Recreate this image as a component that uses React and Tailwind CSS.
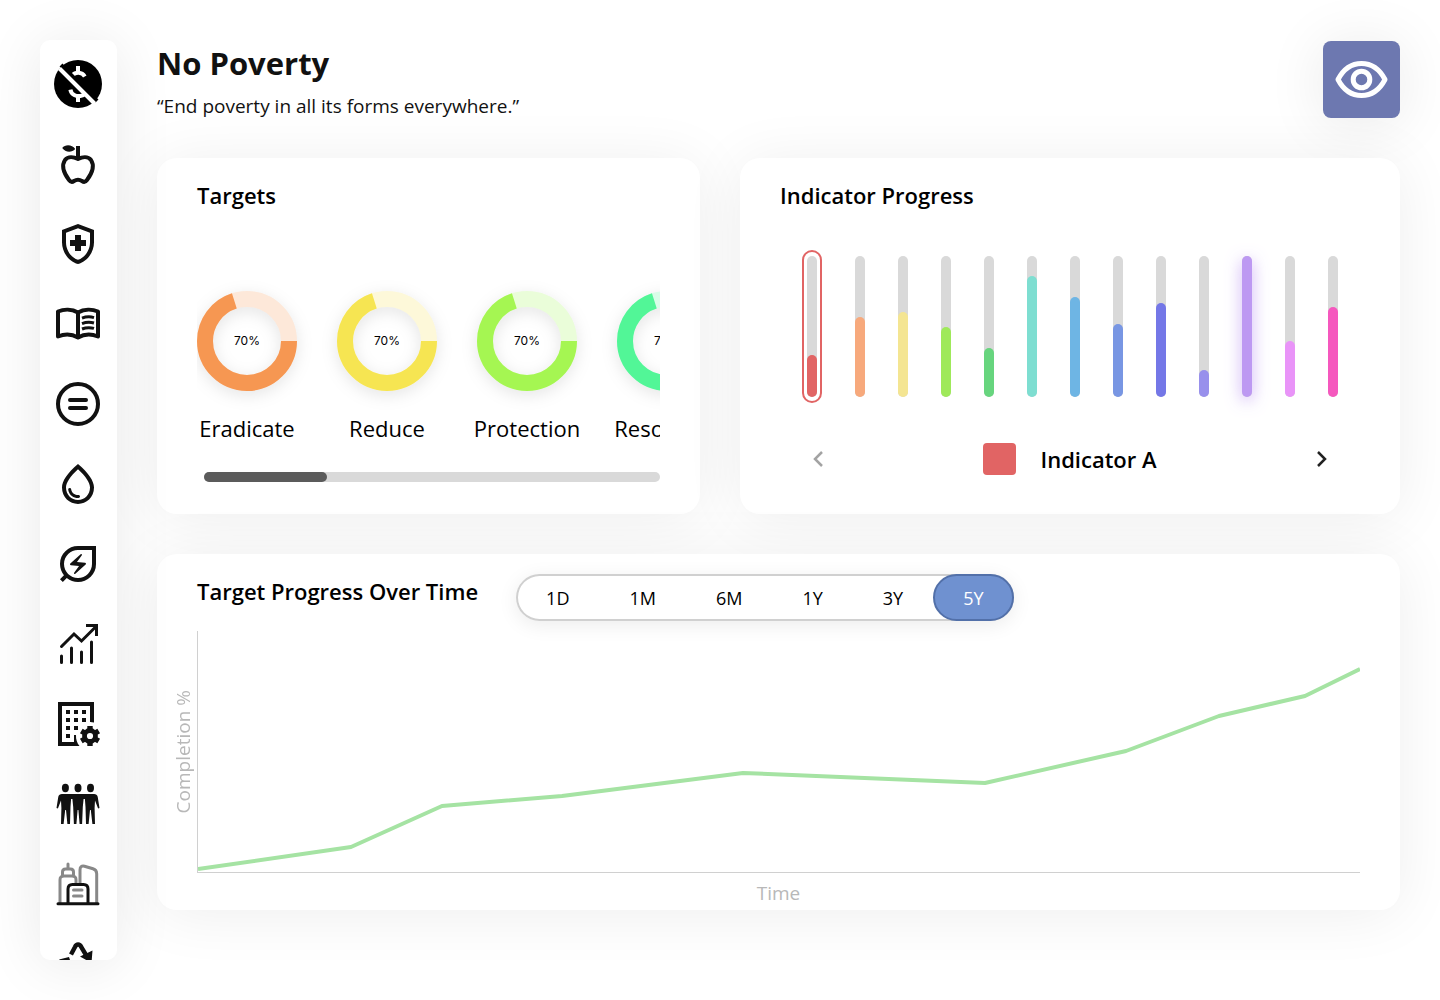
import React, { useState } from 'react';
import { MdOutlineHealthAndSafety, MdOutlineWaterDrop, MdOutlineEnergySavingsLeaf } from 'react-icons/md';

const targets = [
    { name: 'Eradicate', percent: 70, ring: '#f69752', track: '#fde8d9' },
    { name: 'Reduce', percent: 70, ring: '#f6e552', track: '#fdf8d9' },
    { name: 'Protection', percent: 70, ring: '#a5f652', track: '#eafdd9' },
    { name: 'Resources', percent: 70, ring: '#52f697', track: '#d9fde8' },
];

const indicators = [
    { name: 'Indicator A', color: '#e16464', value: 30 },
    { name: 'Indicator B', color: '#f7a97c', value: 57 },
    { name: 'Indicator C', color: '#f4e592', value: 60 },
    { name: 'Indicator D', color: '#9fe95a', value: 50 },
    { name: 'Indicator E', color: '#67d57e', value: 35 },
    { name: 'Indicator F', color: '#7eded1', value: 86 },
    { name: 'Indicator G', color: '#6eb5e4', value: 71 },
    { name: 'Indicator H', color: '#7896e3', value: 52 },
    { name: 'Indicator I', color: '#7477e7', value: 67 },
    { name: 'Indicator J', color: '#9890ec', value: 19 },
    { name: 'Indicator K', color: '#bd99f2', value: 100 },
    { name: 'Indicator L', color: '#e994f8', value: 40 },
    { name: 'Indicator M', color: '#f558be', value: 64 },
];

const ranges = ['1D', '1M', '6M', '1Y', '3Y', '5Y'];

// --- SIDEBAR ICONS ---
function NoPovertyIcon() {
    return (
        <svg className="w-12 h-12" viewBox="0 0 48 48" fill="none">
            <circle cx="24" cy="24" r="24" fill="#000" />
            <g stroke="#fff" strokeWidth="4">
                <path d="M24 6v6M24 36v6" />
                <path d="M18.6 15.2c2.6-3.4 9.4-3.6 12.2 1.2" />
                <path d="M16.4 29.6c.8 5.2 6 7 10 6.4 2-.3 3.4-1 4.6-2.4" />
            </g>
            <path d="M7 5l36 36" stroke="#000" strokeWidth="4" />
            <path d="M5.500 8.500L40.500 43.500" stroke="#fff" strokeWidth="4" />
        </svg>
    );
}

function AppleIcon() {
    return (
        <svg className="w-12 h-12" viewBox="0 0 48 48" fill="none" stroke="#111" strokeWidth="4" strokeLinejoin="round">
            <path d="M24 6v13" />
            <path d="M8.2 8c3-4 10-3.600 13 1-3.500 4-10 3.400-13-1z" fill="#111" stroke="none" />
            <path d="M24 19c-4-2-10-3-13 1-4 6-.5 14 4 20 1.500 2 3 2.400 5 1 2.500-1.600 5.500-1.600 8 0 2 1.400 3.500 1 5-1 4.500-6 8-14 4-20-3-4-9-3-13-1z" />
        </svg>
    );
}

function BookIcon() {
    return (
        <svg className="w-12 h-12" viewBox="0 0 48 48" fill="none" stroke="#111" strokeWidth="4" strokeLinejoin="round">
            <path d="M24 12.500C18 9 10 9 4 11.500V36.500c6-2.400 14-2.400 20 1 6-3.400 14-3.400 20-1V11.500C38 9 30 9 24 12.500zM24 12.500v25" />
            <path d="M28 18.200c4-1.600 8-1.800 12-.6M28 23.600c4-1.600 8-1.800 12-.6M28 29c4-1.600 8-1.800 12-.6" strokeWidth="3" />
        </svg>
    );
}

function EqualityIcon() {
    return (
        <svg className="w-12 h-12" viewBox="0 0 48 48" fill="none" stroke="#111" strokeWidth="4" strokeLinecap="round">
            <circle cx="24" cy="24" r="20" />
            <path d="M16 20h16M16 28h16" />
        </svg>
    );
}

function GrowthIcon() {
    return (
        <svg className="w-12 h-12" viewBox="0 0 48 48" fill="none" stroke="#111" strokeWidth="3" strokeLinecap="round">
            <path d="M7.500 26.500L20 14l7.500 7L42.500 6" />
            <path d="M33.500 5.500h9v9" strokeLinecap="square" />
            <path d="M7.500 36v6.500M17.500 28v14.500M27.500 32v10.500M37.500 22v20.500" />
        </svg>
    );
}

function BuildingIcon() {
    return (
        <svg className="w-12 h-12" viewBox="0 0 48 48" fill="#111">
            <path d="M4 2h36v20.500a14 14 0 0 0-4-.5V6H8v36h12v-7h2c-.2 4.500 1 8 3.500 11H4z" />
            <path d="M12 10h4v4h-4zM20 10h4v4h-4zM28 10h4v4h-4zM12 18h4v4h-4zM20 18h4v4h-4zM28 18h4v4h-4zM12 26h4v4h-4zM20 26h4v4h-4zM12 34h4v4h-4z" />
            <circle cx="36" cy="36" r="5.500" fill="none" stroke="#111" strokeWidth="4.800" />
            <g stroke="#111" strokeWidth="5.400">
                <path d="M36 26v4M36 42v4M27.300 31l3.500 2M41.200 39l3.500 2M27.300 41l3.500-2M41.200 33l3.500-2" />
            </g>
        </svg>
    );
}

function PeopleIcon() {
    return (
        <svg className="w-12 h-12" viewBox="0 0 48 48" fill="#111">
            <ellipse cx="11.400" cy="8" rx="3.500" ry="4.200" />
            <ellipse cx="24" cy="8" rx="3.500" ry="4.200" />
            <ellipse cx="36.500" cy="8" rx="3.500" ry="4.200" />
            <path d="M8 14h32c2 0 3.200.8 3.700 2.800L45.500 28l-1.400.6L41 20.500l-.4 7.500.4 16h-2.600L36.800 30h-.8L34.600 44H32l-.5-17-.6-8h-1.300l-.8 8-.7 17h-2.500l-1.200-14h-.8l-1.200 14h-2.500l-.7-17-.8-8h-1.300l-.6 8L16 44h-2.600L12 30h-.8L9.600 44H7l.4-16-.4-7.500-3.100 8.100-1.400-.6 1.800-11.200C4.800 14.800 6 14 8 14z" />
        </svg>
    );
}

function CityIcon() {
    return (
        <svg className="w-12 h-12" viewBox="0 0 48 48" fill="none" strokeWidth="3" strokeLinecap="round" strokeLinejoin="round">
            <g stroke="#888">
                <path d="M6 43V20c0-3 1-4 4-4h8c3 0 4 1 4 4v3" />
                <path d="M8.500 15.500V12c0-2 1-3 3-3h5c2 0 3 1 3 3v3.500M14 8.500V4" />
                <path d="M26 23V10c0-3 1.600-4.600 4.500-3.800l8.500 2.600c2.500.8 3.700 2.200 3.700 5V43" />
                <path d="M19.500 30h8.500M19.500 36h8.500" />
            </g>
            <path d="M14 43V29c0-3 1.500-4.500 4.500-4.500h11c3 0 4.500 1.500 4.500 4.500v14M4 43.700h40" stroke="#111" />
        </svg>
    );
}

function RecycleIcon() {
    return (
        <svg className="w-12 h-12" viewBox="0 0 48 48" fill="none">
            <path d="M17 14.500L21 7c1.500-3.300 4.700-3.300 6.200 0l6 10" stroke="#111" strokeWidth="4.400" />
            <path d="M26 16.500l12.500-6-1 12.500z" fill="#111" />
            <path d="M5 19.500l10-2.500 4 12z" fill="#111" />
            <path d="M12 22L6 33c-1.500 3 0 6 3.500 6H18M26 39h12c3.500 0 5-3 3.500-6l-3-5" stroke="#111" strokeWidth="4.400" />
        </svg>
    );
}

const goals = [
    { label: 'No Poverty', icon: <NoPovertyIcon /> },
    { label: 'Zero Hunger', icon: <AppleIcon /> },
    { label: 'Good Health', icon: <MdOutlineHealthAndSafety className="w-12 h-12" /> },
    { label: 'Quality Education', icon: <BookIcon /> },
    { label: 'Gender Equality', icon: <EqualityIcon /> },
    { label: 'Clean Water', icon: <MdOutlineWaterDrop className="w-12 h-12" /> },
    { label: 'Clean Energy', icon: <MdOutlineEnergySavingsLeaf className="w-12 h-12" /> },
    { label: 'Economic Growth', icon: <GrowthIcon /> },
    { label: 'Infrastructure', icon: <BuildingIcon /> },
    { label: 'Reduced Inequalities', icon: <PeopleIcon /> },
    { label: 'Sustainable Cities', icon: <CityIcon /> },
    { label: 'Responsible Consumption', icon: <RecycleIcon /> },
];

function Sidebar() {
    return (
        <nav className="sticky top-10 w-[77px] h-[calc(100vh-80px)] shrink-0 overflow-hidden rounded-[10px] bg-white pt-5 pl-[14px] flex flex-col items-start gap-8 text-[#111] shadow-[0_4px_60px_rgba(0,0,0,0.09)]">
            {goals.map((goal) => (
                <a key={goal.label} href="#" aria-label={goal.label} className="shrink-0">
                    {goal.icon}
                </a>
            ))}
        </nav>
    );
}

function Card({ children, className }) {
    return (
        <section className={`min-w-0 rounded-[20px] bg-white shadow-[0_4px_60px_rgba(0,0,0,0.07)] ${className}`}>
            {children}
        </section>
    );
}

function Donut({ percent, ring, track }) {
    const length = 2 * Math.PI * 42;
    return (
        <svg className="w-[100px] h-[100px] overflow-visible drop-shadow-[0_4px_8px_rgba(0,0,0,0.1)]" viewBox="0 0 100 100" fill="none">
            <circle cx="50" cy="50" r="42" stroke={track} strokeWidth="16" />
            <circle cx="50" cy="50" r="42" stroke={ring} strokeWidth="16" strokeDasharray={`${(length * percent) / 100} ${length}`} />
        </svg>
    );
}

function Targets() {
    return (
        <Card className="h-[356px] px-10 pt-5">
            <h2 className="text-[22px] leading-[34px] font-semibold">Targets</h2>
            <div className="mt-[59px] pt-5 pb-[14px] flex gap-10 overflow-hidden">
                {targets.map((target) => (
                    <div key={target.name} className="w-[100px] shrink-0 flex flex-col items-center">
                        <div className="grid place-items-center">
                            <div className="col-start-1 row-start-1">
                                <Donut percent={target.percent} ring={target.ring} track={target.track} />
                            </div>
                            <span className="col-start-1 row-start-1 font-[Inter] text-xs">{target.percent}%</span>
                        </div>
                        <span className="mt-5 text-[22px] leading-[34px]">{target.name}</span>
                    </div>
                ))}
            </div>
            <div className="ml-[7px] mt-[13px] h-[10px] rounded-full bg-[#d9d9d9]">
                <div className="h-full w-[27%] rounded-full bg-[#5b5b5b]" />
            </div>
        </Card>
    );
}

function IndicatorProgress() {
    const [selected, setSelected] = useState(0);

    return (
        <Card className="h-[356px] px-10 pt-5">
            <h2 className="text-[22px] leading-[34px] font-semibold">Indicator Progress</h2>
            <div className="mt-[38px] flex items-center justify-center gap-[33px]">
                {indicators.map((item, i) => (
                    <button
                      key={item.name}
                      type="button"
                      aria-label={item.name}
                      onClick={() => setSelected(i)}
                      className={i === selected ? "rounded-full border-2 px-[3px] py-1" : ""}
                      style={{ borderColor: item.color }}
                    >
                        <div
                          className={`flex h-[141px] w-[10px] items-end rounded-full bg-[#d9d9d9] ${item.value === 100 ? "shadow-[0_4px_16px_rgba(189,153,242,0.8)]" : ""}`}
                        >
                            <div className="w-full rounded-full" style={{ height: `${item.value}%`, background: item.color }} />
                        </div>
                    </button>
                ))}
            </div>
            <div className="mx-auto mt-[39px] flex w-[516px] items-center justify-between">
                <button type="button" aria-label="Previous indicator" disabled={selected === 0} onClick={() => setSelected(selected - 1)} className="text-[#222] disabled:text-[#a3a3a3]">
                    <svg className="h-[18px] w-3" viewBox="0 0 12 18" fill="none" stroke="currentColor" strokeWidth="2.500">
                        <path d="M10 2L3 9l7 7" />
                    </svg>
                </button>
                <div className="flex items-center gap-6">
                    <span className="h-8 w-[33px] rounded" style={{ background: indicators[selected].color }} />
                    <span className="text-[22px] leading-[34px] font-semibold">{indicators[selected].name}</span>
                </div>
                <button type="button" aria-label="Next indicator" disabled={selected === indicators.length - 1} onClick={() => setSelected(selected + 1)} className="text-[#222] disabled:text-[#a3a3a3]">
                    <svg className="h-[18px] w-3" viewBox="0 0 12 18" fill="none" stroke="currentColor" strokeWidth="2.500">
                        <path d="M2 2l7 7-7 7" />
                    </svg>
                </button>
            </div>
        </Card>
    );
}

function ProgressOverTime() {
    const [range, setRange] = useState('5Y');

    return (
        <Card className="h-[356px] pr-10 pl-4 pt-5">
            <div className="flex items-start gap-[38px] pl-6">
                <h2 className="text-[22px] leading-[34px] font-semibold">Target Progress Over Time</h2>
                <div className="flex h-[47px] rounded-full shadow-[inset_0_0_0_2px_#d0d0d0,0_4px_20px_rgba(0,0,0,0.08)]">
                    {ranges.map((item) => (
                        <button
                          key={item}
                          type="button"
                          onClick={() => setRange(item)}
                          className={`px-7 rounded-full border-2 text-lg ${item === range ? "border-[#5270a9] bg-[#6f91d0] text-white" : "border-transparent"}`}
                        >
                            {item}
                        </button>
                    ))}
                </div>
            </div>
            <div className="mt-[10px] flex">
                <div className="flex w-6 items-center">
                    <span className="rotate-180 text-[19px] leading-5 text-[#b8b8b8] [writing-mode:vertical-rl]">Completion %</span>
                </div>
                <div className="h-[242px] flex-1 border-b border-l border-[#d0d0d0]">
                    <svg className="h-full w-full" viewBox="0 0 1162 241" preserveAspectRatio="none" fill="none">
                        <polyline
                          points="0,238 153,216 244,175 364,165 545,142 787,152 928,120 1021,85 1107,65 1162,38"
                          stroke="#a5e3a3"
                          strokeWidth="4"
                          strokeLinejoin="round"
                          vectorEffect="non-scaling-stroke"
                        />
                    </svg>
                </div>
            </div>
            <p className="mt-2 pl-6 text-center text-[19px] leading-6 text-[#b8b8b8]">Time</p>
        </Card>
    );
}

export default function App() {
    return (
        <div className="flex min-h-screen items-start gap-10 bg-white p-10 font-['Open_Sans',sans-serif] text-black">
            <Sidebar />
            <main className="min-w-0 flex-1">
                <header className="flex h-[78px] items-end justify-between">
                    <div className="self-start text-[#111]">
                        <h1 className="text-[31px] leading-[46px] font-bold">No Poverty</h1>
                        <p className="mt-[6px] text-[19px] leading-7">“End poverty in all its forms everywhere.”</p>
                    </div>
                    <button type="button" aria-label="Toggle view" className="grid h-[77px] w-[77px] place-items-center rounded-lg bg-[#6d78b0] shadow-[0_4px_60px_rgba(0,0,0,0.09)]">
                        <svg className="h-[37px] w-[53px]" viewBox="0 0 53 37" fill="none" stroke="#fff" strokeWidth="5" strokeLinejoin="round">
                            <path d="M3 18.500C8.500 8 16.500 2.500 26.500 2.500S44.500 8 50 18.500C44.500 29 36.500 34.500 26.500 34.500S8.500 29 3 18.500z" />
                            <circle cx="26.500" cy="18.500" r="8.300" />
                        </svg>
                    </button>
                </header>

                <div className="mt-10 grid grid-cols-[543fr_660fr] gap-10">
                    <Targets />
                    <IndicatorProgress />
                    <div className="col-span-2 min-w-0">
                        <ProgressOverTime />
                    </div>
                </div>
            </main>
        </div>
    );
}
